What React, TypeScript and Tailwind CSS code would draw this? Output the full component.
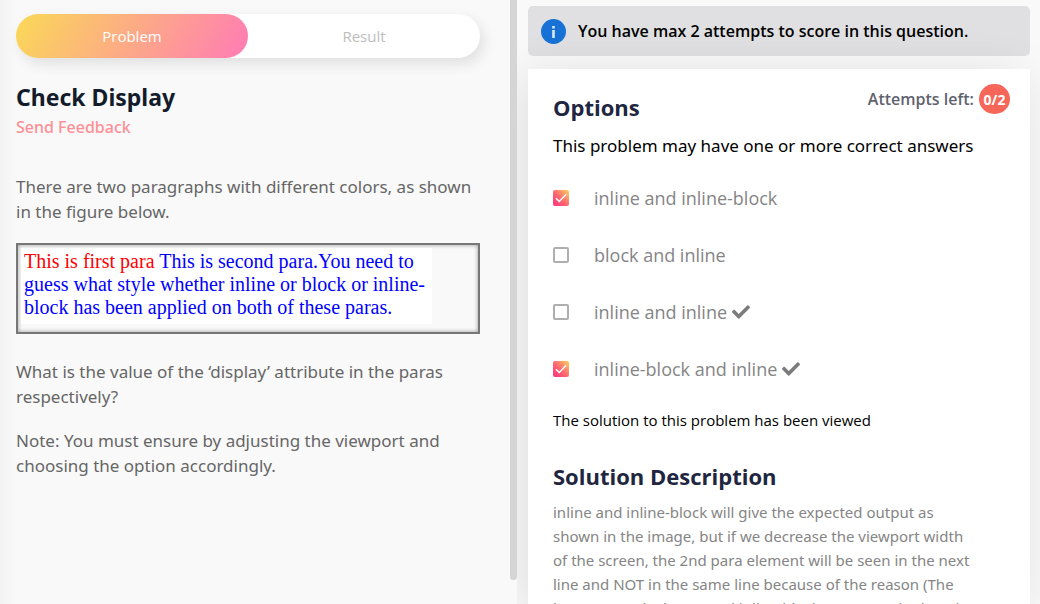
import { FaCheck } from "react-icons/fa";

const options = [
  { label: "inline and inline-block", checked: true, correct: false },
  { label: "block and inline", checked: false, correct: false },
  { label: "inline and inline", checked: false, correct: true },
  { label: "inline-block and inline", checked: true, correct: true },
];

function Option({ label, checked, correct }: { label: string; checked: boolean; correct: boolean }) {
  return (
    <li className="flex h-[57px] items-start">
      <label className="flex items-center font-['Open_Sans',sans-serif] text-[18px] leading-6 text-[#858585]">
        <span className="mr-[25px] grid size-4 shrink-0">
          <input
            type="checkbox"
            defaultChecked={checked}
            className="peer col-start-1 row-start-1 size-4 appearance-none rounded-[2px] border-2 border-[#afafaf] bg-white checked:border-0 checked:bg-linear-[45deg,#ff2e7e,#ff6c70_50%,#fbd35c]"
          />
          <svg viewBox="0 0 16 16" fill="none" stroke="white" strokeWidth="1.4" className="pointer-events-none invisible col-start-1 row-start-1 size-4 peer-checked:visible">
            <path d="M3 8.3 6.2 11.5 13.2 4.3" />
          </svg>
        </span>
        {label}
        {correct && <FaCheck aria-label="Correct answer" className="ml-[5px] size-[18px] text-[#7b7b7b]" />}
      </label>
    </li>
  );
}

export default function App() {
  return (
    <div className="flex h-screen overflow-hidden bg-[#f9f9f9] font-['Noto_Sans',sans-serif] text-[#666]">
      <section className="z-10 flex flex-1 bg-linear-to-r from-[#f3f3f3] to-[#f9f9f9] to-[16px]">
        <div className="min-w-0 flex-1 pt-[14px] pr-[30px] pl-4">
          <nav className="flex h-11 rounded-full bg-white font-['Open_Sans',sans-serif] text-[15px] shadow-[4px_6px_14px_rgba(0,0,0,0.1)]">
            <button type="button" className="flex-1 rounded-full bg-linear-[120deg,#fad957,#ff7bb5] text-white">Problem</button>
            <button type="button" className="flex-1 text-[#bdbdbd]">Result</button>
          </nav>
          <h1 className="mt-6 text-[23px] leading-[30px] font-bold text-[#141c2c]">Check Display</h1>
          <a href="#feedback" className="block text-[16px] leading-[30px] font-medium text-[#ff8f96]">Send Feedback</a>
          <p className="mt-8 text-[17px] leading-[25px]">There are two paragraphs with different colors, as shown<br />in the figure below.</p>
          <figure className="mt-[19px] h-[91px] border-2 border-[#777] p-[3px] font-['Liberation_Serif',serif] text-[20px] leading-[23px] text-[#0000ff] shadow-[inset_0_0_4px_rgba(0,0,0,0.4)]">
            <p className="h-[76px] w-[411px] bg-white pt-[2px] pl-[3px]">
              <span className="text-[#ff0000]">This is first para</span> This is second para.You need to<br />
              guess what style whether inline or block or inline-<br />
              block has been applied on both of these paras.
            </p>
          </figure>
          <p className="mt-[25px] text-[17px] leading-[25px]">What is the value of the ‘display’ attribute in the paras<br />respectively?</p>
          <p className="mt-[19px] text-[17px] leading-[25px]">Note: You must ensure by adjusting the viewport and<br />choosing the option accordingly.</p>
        </div>
        <div className="mb-6 w-[7px] rounded-b-full bg-[#d5d5d5]" />
      </section>

      <section className="flex w-[523px] shrink-0 flex-col pt-[6px] pr-[10px] pl-[11px]">
        <div role="status" className="flex h-[50px] shrink-0 items-center rounded-[5px] bg-[#e0e0e2] pl-[13px] font-['Open_Sans',sans-serif] text-[16px] font-semibold text-black">
          <svg viewBox="0 0 25 25" className="mr-3 size-[25px]" aria-hidden="true">
            <circle cx="12.5" cy="12.5" r="12.5" fill="#1872d6" />
            <path d="M11.2 7h2.6v2.5h-2.6zM11.2 11h2.6v8h-2.6z" fill="#dce8f7" />
          </svg>
          You have max 2 attempts to score in this question.
        </div>
        <main className="mt-[13px] min-h-0 flex-1 bg-white pr-5 pl-[25px] shadow-[-6px_6px_45px_rgba(0,0,0,0.11)]">
          <header className="flex justify-between pt-[15px] font-['Open_Sans',sans-serif]">
            <h2 className="pt-[7px] text-[22px] leading-8 font-bold text-[#1f2640]">Options</h2>
            <div className="flex h-[30px] items-center gap-[5px] text-[16px] font-semibold text-[#5f626e]">
              Attempts left:
              <span className="grid h-[30px] w-[31px] place-items-center rounded-full bg-[#f66659] text-[14px] font-bold text-white">0/2</span>
            </div>
          </header>
          <p className="mt-[11px] text-[17px] leading-6 text-black">This problem may have one or more correct answers</p>
          <ul className="mt-7">
            {options.map((option) => <Option key={option.label} {...option} />)}
          </ul>
          <p className="-mt-[6px] font-['Open_Sans',sans-serif] text-[15px] leading-6 text-black">The solution to this problem has been viewed</p>
          <h2 className="mt-7 font-['Open_Sans',sans-serif] text-[22px] leading-8 font-bold text-[#1f2640]">Solution Description</h2>
          <p className="mt-2 text-[15px] leading-6 whitespace-nowrap text-[#858585]">
            inline and inline-block will give the expected output as<br />
            shown in the image, but if we decrease the viewport width<br />
            of the screen, the 2nd para element will be seen in the next<br />
            line and NOT in the same line because of the reason (The<br />
            browser reads the second inline-block para as a single unit)
          </p>
        </main>
      </section>
    </div>
  );
}
